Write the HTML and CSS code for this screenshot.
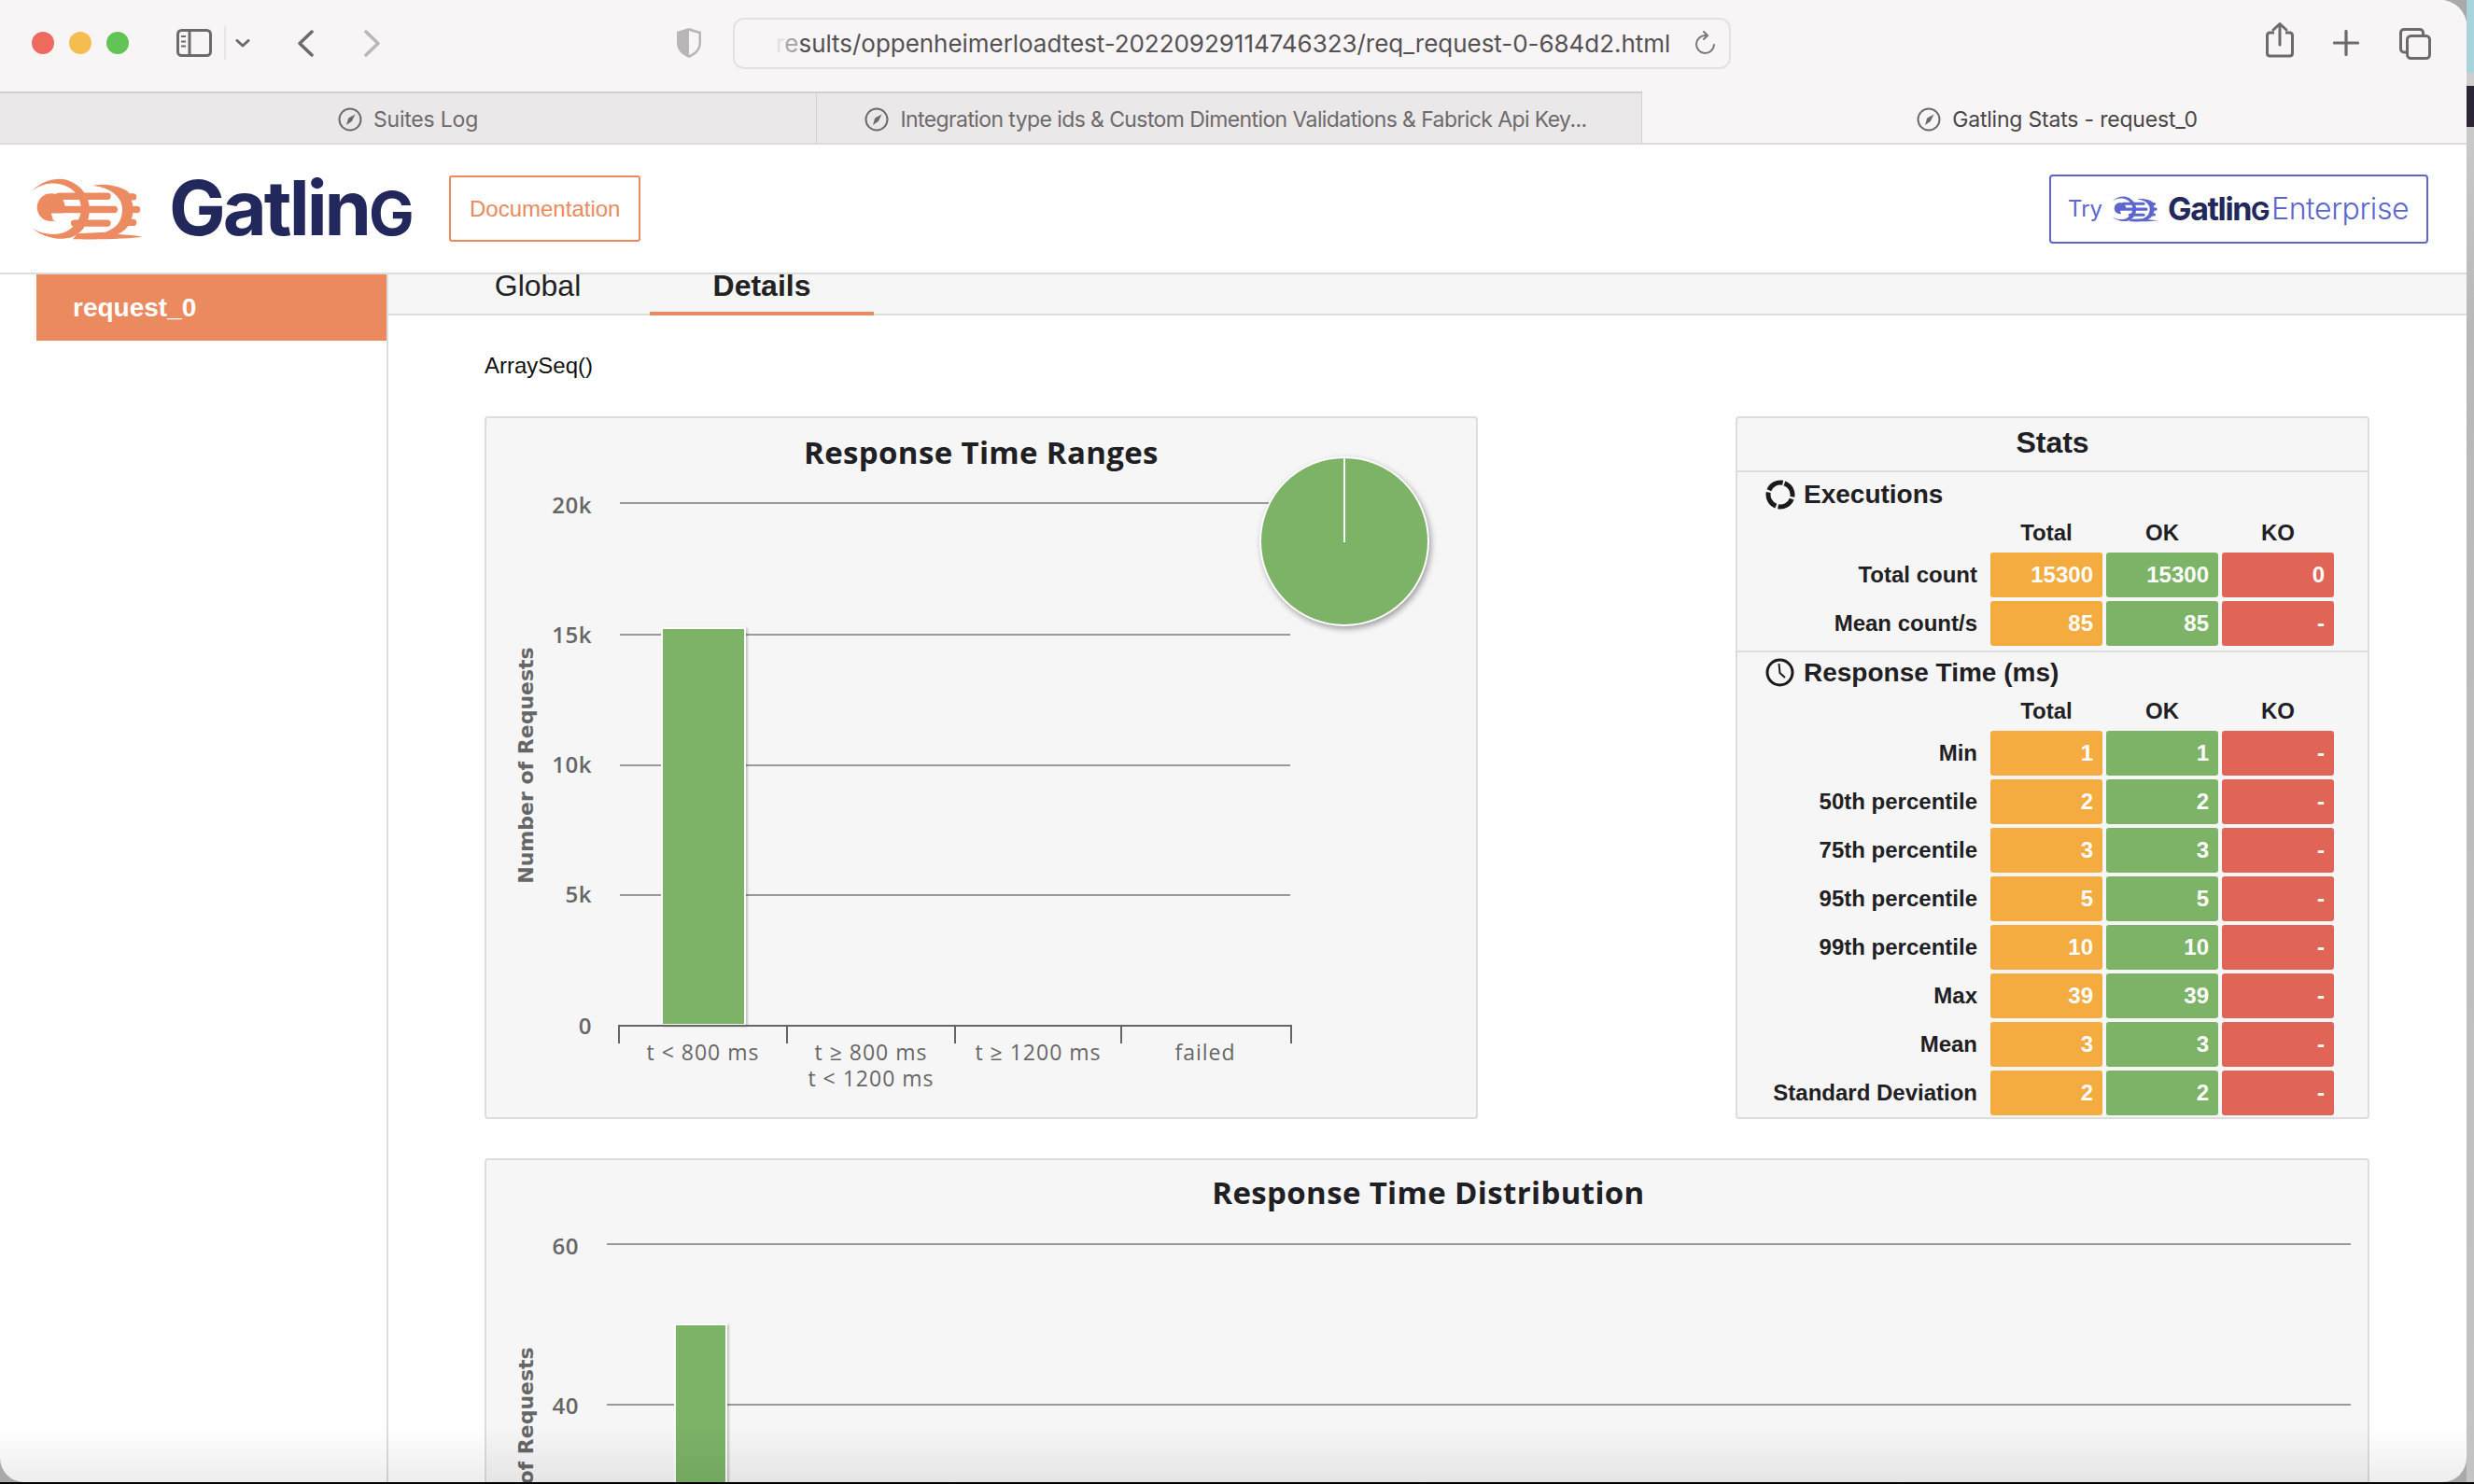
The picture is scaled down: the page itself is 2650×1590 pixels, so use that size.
FILE: index.html
```html
<!DOCTYPE html>
<html lang="en">
<head>
  <meta charset="UTF-8" />
  <title>Gatling Stats - request_0</title>
  <link rel="stylesheet" href="styles.css">
</head>
<body>

  <svg class="defs" width="0" height="0">
    <symbol id="gatling-mark" viewBox="100 90 370 205">
      <path fill="currentColor" d="M105 135C140 102 190 90 225 105C265 120 290 160 289 195C290 235 270 270 235 285C190 300 140 287 105 258C140 280 190 283 220 265C250 245 262 220 262 195C262 170 250 140 220 125C185 105 140 110 105 135Z"/>
      <path fill="currentColor" d="M300 120C350 108 410 130 418 145H430A11 11 0 0 1 430 167H424Q428 176 429 186H442A11 11 0 0 1 442 208H429Q428 218 424 228H430A11 11 0 0 1 430 250H414C404 264 392 272 380 277C410 279 440 281 462 285C400 293 300 294 235 293L250 275L340 270C385 255 395 225 395 195C395 160 360 125 300 120Z"/>
      <circle fill="currentColor" cx="165" cy="190" r="45"/>
      <g stroke="currentColor" stroke-width="22" stroke-linecap="round">
        <path d="M190 154H347"/>
        <path d="M165 197H369"/>
        <path d="M240 241H347"/>
      </g>
      <path fill="#fff" d="M165 209H214L206 232H172Z"/>
    </symbol>
    <symbol id="compass" viewBox="0 0 26 26">
      <circle cx="13" cy="13" r="11.5" fill="none" stroke="currentColor" stroke-width="2"/>
      <path fill="currentColor" d="M18.5 7.5L14.8 15L9 19L11.2 11.6Z"/>
    </symbol>
  </svg>

  <div class="screen">
    <div class="window">

      <div class="toolbar">
        <div class="lights">
          <span class="light red"></span>
          <span class="light yellow"></span>
          <span class="light green"></span>
        </div>
        <svg class="tool sidebar-icon" width="38" height="30" viewBox="0 0 38 30">
          <rect x="1.5" y="1.5" width="35" height="27" rx="4" fill="none" stroke="currentColor" stroke-width="3"/>
          <path d="M14 1.5V28.5" stroke="currentColor" stroke-width="3"/>
          <path d="M5 8H10M5 13.500H10M5 18.500H10" stroke="currentColor" stroke-width="2"/>
        </svg>
        <span class="tool-sep"></span>
        <svg class="tool chevron-icon" width="16" height="9" viewBox="0 0 16 9">
          <path d="M2 1.500L8 7L14 1.500" fill="none" stroke="currentColor" stroke-width="3" stroke-linecap="round" stroke-linejoin="round"/>
        </svg>
        <svg class="tool back-icon" width="18" height="29" viewBox="0 0 18 29">
          <path d="M16 2L3 14.500L16 27" fill="none" stroke="currentColor" stroke-width="3.500" stroke-linecap="round" stroke-linejoin="round"/>
        </svg>
        <svg class="tool forward-icon" width="18" height="29" viewBox="0 0 18 29">
          <path d="M2 2L15 14.500L2 27" fill="none" stroke="currentColor" stroke-width="3.500" stroke-linecap="round" stroke-linejoin="round"/>
        </svg>
        <svg class="tool shield-icon" width="28" height="34" viewBox="0 0 28 34">
          <path d="M14 1L27 5V17C27 25 21 30 14 33C7 30 1 25 1 17V5Z" fill="#b9b6b7"/>
          <path d="M14 4L24.500 7V17C24.500 23.500 20 27.500 14 30Z" fill="#f8f5f6"/>
        </svg>
        <div class="url-bar">
          <span class="url-text"><span class="url-fade-1">r</span><span class="url-fade-2">e</span>sults/oppenheimerloadtest-20220929114746323/req_request-0-684d2.html</span>
          <svg class="reload-icon" width="24" height="26" viewBox="0 0 24 26">
            <path d="M12 5A9.500 9.500 0 1 0 21 15" fill="none" stroke="currentColor" stroke-width="2" stroke-linecap="round"/>
            <path d="M10 1L14 5L10 9" fill="none" stroke="currentColor" stroke-width="2" stroke-linecap="round" stroke-linejoin="round"/>
          </svg>
        </div>
        <svg class="tool share-icon" width="30" height="38" viewBox="0 0 30 38">
          <path d="M9 11H4A3 3 0 0 0 1.500 14V33A3 3 0 0 0 4 36H26A3 3 0 0 0 28.500 33V14A3 3 0 0 0 26 11H21" fill="none" stroke="currentColor" stroke-width="3"/>
          <path d="M15 24V2M8 8L15 1.500L22 8" fill="none" stroke="currentColor" stroke-width="3" stroke-linecap="round" stroke-linejoin="round"/>
        </svg>
        <svg class="tool plus-icon" width="28" height="28" viewBox="0 0 28 28">
          <path d="M14 1.500V26.500M1.500 14H26.500" stroke="currentColor" stroke-width="3.200" stroke-linecap="round"/>
        </svg>
        <svg class="tool copy-icon" width="34" height="34" viewBox="0 0 34 34">
          <path d="M7 26H5A3.500 3.500 0 0 1 1.500 22.500V5A3.500 3.500 0 0 1 5 1.500H22A3.500 3.500 0 0 1 25.500 5V8" fill="none" stroke="currentColor" stroke-width="3"/>
          <rect x="8.500" y="8.500" width="24" height="24" rx="4" fill="none" stroke="currentColor" stroke-width="3"/>
        </svg>
      </div>

      <div class="tab-bar">
        <div class="browser-tab tab-first">
          <svg width="26" height="26"><use href="#compass"/></svg>
          <span>Suites Log</span>
        </div>
        <div class="browser-tab tab-second">
          <svg width="26" height="26"><use href="#compass"/></svg>
          <span>Integration type ids &amp; Custom Dimention Validations &amp; Fabrick Api Key...</span>
        </div>
        <div class="browser-tab tab-active">
          <svg width="26" height="26"><use href="#compass"/></svg>
          <span>Gatling Stats - request_0</span>
        </div>
      </div>

      <header class="site-header">
        <svg class="logo-mark" width="123" height="68"><use href="#gatling-mark"/></svg>
        <span class="brand-name">Gatlin<span class="brand-g">g</span></span>
        <a class="doc-btn">Documentation</a>
        <a class="try-btn">
          <span class="try-label">Try</span>
          <svg class="try-mark" width="51" height="29"><use href="#gatling-mark"/></svg>
          <span class="brand-name small">Gatlin<span class="brand-g">g</span></span>
          <span class="try-enterprise">Enterprise</span>
        </a>
      </header>

      <div class="page-body">
        <aside class="side-nav">
          <div class="side-item">request_0</div>
        </aside>

        <main class="content">
          <nav class="report-tabs">
            <div class="report-tab">Global</div>
            <div class="report-tab active">Details</div>
          </nav>

          <div class="report">
            <p class="array-seq">ArraySeq()</p>

            <div class="top-row">
              <section class="panel ranges-panel">
                <svg class="chart" width="1064" height="753" viewBox="519 446 1064 753">
                  <text class="chart-title" x="1051" y="497">Response Time Ranges</text>
                  <text class="axis-title" transform="translate(571 820) rotate(-90)">Number of Requests</text>

                  <line class="grid" x1="664" y1="539" x2="1382" y2="539"/>
                  <line class="grid" x1="664" y1="680" x2="1382" y2="680"/>
                  <line class="grid" x1="664" y1="820" x2="1382" y2="820"/>
                  <line class="grid" x1="664" y1="959" x2="1382" y2="959"/>

                  <text class="y-label" x="634" y="550">20k</text>
                  <text class="y-label" x="634" y="689">15k</text>
                  <text class="y-label" x="634" y="828">10k</text>
                  <text class="y-label" x="634" y="967">5k</text>
                  <text class="y-label" x="634" y="1108">0</text>

                  <rect class="bar" x="709" y="673" width="89" height="425"/>

                  <path class="axis" d="M663 1118V1099H1383V1118M843 1099V1118M1023 1099V1118M1201 1099V1118"/>
                  <text class="x-label" x="753" y="1136">t &lt; 800 ms</text>
                  <text class="x-label" x="933" y="1136">t ≥ 800 ms</text>
                  <text class="x-label" x="933" y="1164">t &lt; 1200 ms</text>
                  <text class="x-label" x="1112" y="1136">t ≥ 1200 ms</text>
                  <text class="x-label" x="1291" y="1136">failed</text>

                  <circle class="pie" cx="1440" cy="580" r="90"/>
                  <line class="pie-slice" x1="1440" y1="490" x2="1440" y2="581"/>
                </svg>
              </section>

              <section class="panel stats-panel">
                <h2 class="stats-title">Stats</h2>

                <div class="stats-section">
                  <h3 class="stats-heading">
                    <svg width="32" height="32" viewBox="0 0 32 32">
                      <circle cx="16" cy="16" r="13" fill="none" stroke="#1b1b1b" stroke-width="5" stroke-dasharray="18 2.420" transform="rotate(-70 16 16)"/>
                    </svg>
                    Executions
                  </h3>
                  <div class="stats-grid">
                    <span></span><span class="col-head">Total</span><span class="col-head">OK</span><span class="col-head">KO</span>
                    <span class="row-label">Total count</span><span class="cell total">15300</span><span class="cell ok">15300</span><span class="cell ko">0</span>
                    <span class="row-label">Mean count/s</span><span class="cell total">85</span><span class="cell ok">85</span><span class="cell ko">-</span>
                  </div>
                </div>

                <div class="stats-section">
                  <h3 class="stats-heading">
                    <svg width="32" height="32" viewBox="0 0 32 32">
                      <circle cx="15.500" cy="15.500" r="13.500" fill="none" stroke="#1b1b1b" stroke-width="3"/>
                      <path d="M14.500 6L15.500 16L21 21" fill="none" stroke="#1b1b1b" stroke-width="2"/>
                    </svg>
                    Response Time (ms)
                  </h3>
                  <div class="stats-grid">
                    <span></span><span class="col-head">Total</span><span class="col-head">OK</span><span class="col-head">KO</span>
                    <span class="row-label">Min</span><span class="cell total">1</span><span class="cell ok">1</span><span class="cell ko">-</span>
                    <span class="row-label">50th percentile</span><span class="cell total">2</span><span class="cell ok">2</span><span class="cell ko">-</span>
                    <span class="row-label">75th percentile</span><span class="cell total">3</span><span class="cell ok">3</span><span class="cell ko">-</span>
                    <span class="row-label">95th percentile</span><span class="cell total">5</span><span class="cell ok">5</span><span class="cell ko">-</span>
                    <span class="row-label">99th percentile</span><span class="cell total">10</span><span class="cell ok">10</span><span class="cell ko">-</span>
                    <span class="row-label">Max</span><span class="cell total">39</span><span class="cell ok">39</span><span class="cell ko">-</span>
                    <span class="row-label">Mean</span><span class="cell total">3</span><span class="cell ok">3</span><span class="cell ko">-</span>
                    <span class="row-label">Standard Deviation</span><span class="cell total">2</span><span class="cell ok">2</span><span class="cell ko">-</span>
                  </div>
                </div>
              </section>
            </div>

            <section class="panel distribution-panel">
              <svg class="chart" width="2019" height="480" viewBox="519 1241 2019 480">
                <text class="chart-title" x="1530" y="1290">Response Time Distribution</text>
                <text class="axis-title" transform="translate(571 1570) rotate(-90)">Number of Requests</text>

                <line class="grid" x1="650" y1="1333" x2="2518" y2="1333"/>
                <line class="grid" x1="650" y1="1505" x2="2518" y2="1505"/>
                <line class="grid" x1="650" y1="1677" x2="2518" y2="1677"/>

                <text class="y-label" x="620" y="1344">60</text>
                <text class="y-label" x="620" y="1515">40</text>

                <rect class="bar" x="723" y="1419" width="55" height="300"/>
              </svg>
            </section>
          </div>
        </main>
      </div>

      <div class="bottom-fade"></div>
    </div>

    <div class="desktop-edge">
      <span class="edge-sky"></span>
      <span class="edge-grey"></span>
      <span class="edge-photo"></span>
      <span class="edge-light"></span>
    </div>
  </div>
  <div class="dock-line"></div>

</body>
</html>
```

FILE: styles.css
```css
* {
  margin: 0;
  padding: 0;
  box-sizing: border-box;
}

html, body {
  height: 1590px;
  overflow: hidden;
}

body {
  background-color: #000;
  font-family: "Liberation Sans", Arial, sans-serif;
  color: #1f2024;
}

.defs {
  position: absolute;
}

.screen {
  display: flex;
  height: 1588px;
  background-color: #a9a9a9;
}

.dock-line {
  height: 2px;
  background-color: #000;
}

.window {
  position: relative;
  display: flex;
  flex-direction: column;
  width: 2642px;
  height: 1588px;
  background-color: #fff;
  border-radius: 0 28px 26px 26px;
  overflow: hidden;
}

.desktop-edge {
  display: flex;
  flex-direction: column;
  width: 8px;
  height: 1588px;
  box-shadow: inset 3px 0 3px rgba(0,0,0,0.25);
}

.edge-sky { height: 78px; background-color: #a8d3db; }
.edge-grey { height: 14px; background-color: #cfcdcc; }
.edge-photo { height: 44px; background-color: #2b2533; }
.edge-light { flex: 1; background: linear-gradient(#c9c9c9, #b8b8b8 15%, #c4c4c4); }

/* browser chrome */
.toolbar {
  display: flex;
  align-items: center;
  flex-shrink: 0;
  height: 98px;
  padding-bottom: 6px;
  background-color: #f8f5f6;
}

.lights {
  display: flex;
  gap: 16px;
  margin-left: 34px;
}

.light {
  width: 24px;
  height: 24px;
  border-radius: 50%;
}

.light.red { background-color: #ee6a5f; }
.light.yellow { background-color: #f5bd4f; }
.light.green { background-color: #61c454; }

.tool { flex-shrink: 0; color: #6e6a6b; }
.sidebar-icon { margin-left: 51px; }
.tool-sep { width: 2px; height: 36px; margin-left: 13px; background-color: #e8e5e6; }
.chevron-icon { margin-left: 10px; }
.back-icon { margin-left: 50px; }
.forward-icon { margin-left: 54px; color: #b9b6b7; }
.shield-icon { margin-left: 316px; }

.url-bar {
  display: flex;
  align-items: center;
  justify-content: space-between;
  width: 1069px;
  height: 55px;
  margin-left: 33px;
  padding: 0 13px 0 44px;
  border: 2px solid #e4e1e2;
  border-radius: 12px;
}

.url-text {
  font-family: Inter, "Liberation Sans", sans-serif;
  font-size: 26px;
  letter-spacing: -0.04px;
  color: #555153;
  white-space: nowrap;
}

.url-fade-1 { color: #e4e1e2; }
.url-fade-2 { color: #a9a6a7; }
.reload-icon { color: #7a7677; }

.share-icon { margin-left: 573px; margin-top: -6px; }
.plus-icon { margin-left: 42px; }
.copy-icon { margin-left: 43px; margin-top: 2px; }

.tab-bar {
  display: flex;
  flex-shrink: 0;
  height: 57px;
}

.browser-tab {
  display: flex;
  align-items: center;
  justify-content: center;
  gap: 12px;
  padding-top: 2px;
  font-family: Inter, "Liberation Sans", sans-serif;
  font-size: 23px;
  letter-spacing: -0.2px;
  color: #6e6a6b;
  background-color: #ebe8e9;
  border-top: 2px solid #d3d0d1;
  border-bottom: 2px solid #dedcdc;
}

.tab-first { width: 875px; border-right: 1px solid #d3d0d1; }
.tab-second { width: 884px; padding-right: 7px; border-right: 1px solid #d3d0d1; letter-spacing: -0.6px; }

.tab-active {
  flex: 1;
  padding-left: 6px;
  background-color: #f8f5f6;
  border-top-color: #f8f5f6;
  color: #4a4647;
}

.tab-active svg { color: #6e6a6b; }

/* gatling header */
.site-header {
  display: flex;
  align-items: center;
  flex-shrink: 0;
  height: 139px;
  padding-left: 33px;
  background-color: #fff;
  border-bottom: 2px solid #ddd;
}

.logo-mark { color: #ec8b61; margin-top: -2px; }

.brand-name {
  width: 258px;
  margin-left: 25px;
  font-family: Inter, "Liberation Sans", sans-serif;
  font-size: 81px;
  font-weight: 700;
  letter-spacing: -3px;
  line-height: 1;
  color: #22275c;
  white-space: nowrap;
}

.brand-g {
  font-size: 0.8em;
  text-transform: uppercase;
}

.doc-btn {
  margin-left: 42px;
  padding: 20px;
  font-size: 24px;
  line-height: 27px;
  color: #ea8a5e;
  border: 2px solid #ea8a5e;
  border-radius: 3px;
}

.try-btn {
  display: flex;
  align-items: center;
  width: 406px;
  height: 74px;
  margin-left: auto;
  margin-right: 41px;
  padding-left: 18px;
  border: 2px solid #5c66cc;
  border-radius: 4px;
  color: #5c66cc;
  font-family: Inter, "Liberation Sans", sans-serif;
}

.try-label { font-size: 24px; }
.try-mark { margin-left: 10px; color: #5c66cc; }

.brand-name.small {
  width: 110px;
  margin-left: 9px;
  font-size: 34px;
  letter-spacing: -1.4px;
}

.try-enterprise {
  margin-left: 1px;
  font-size: 32px;
  font-weight: 300;
  letter-spacing: -0.4px;
}

/* report */
.page-body {
  display: flex;
  flex: 1;
  min-height: 0;
}

.side-nav {
  flex-shrink: 0;
  width: 416px;
  padding-left: 39px;
  border-right: 2px solid #ddd;
}

.side-item {
  height: 71px;
  padding: 20px 0 0 39px;
  font-size: 28px;
  font-weight: 700;
  color: #fff;
  background-color: #eb8a5f;
}

.content {
  flex: 1;
  min-width: 0;
}

.report-tabs {
  display: flex;
  height: 44px;
  padding-left: 40px;
  background-color: #f6f6f6;
  border-bottom: 2px solid #ddd;
}

.report-tab {
  width: 240px;
  height: 44px;
  font-size: 32px;
  line-height: 24px;
  text-align: center;
  overflow: hidden;
  color: #222;
}

.report-tab.active {
  font-weight: 700;
  border-bottom: 4px solid #eb8a5f;
}

.report {
  padding: 0 104px 0 103px;
}

.array-seq {
  height: 108px;
  padding-top: 40px;
  font-size: 24px;
  line-height: 28px;
  color: #111;
}

.top-row {
  display: flex;
  justify-content: space-between;
}

.panel {
  background-color: #f6f6f6;
  box-shadow: inset 0 0 0 2px #ddd;
  border-radius: 4px;
}

.ranges-panel {
  width: 1064px;
  height: 753px;
}

.chart {
  display: block;
}

.chart-title {
  font-family: "Open Sans", sans-serif;
  font-size: 33px;
  font-weight: 700;
  letter-spacing: 0.35px;
  text-anchor: middle;
  fill: #1f2024;
}

.axis-title {
  font-family: "DejaVu Sans", sans-serif;
  font-size: 22px;
  font-weight: 700;
  text-anchor: middle;
  fill: #666;
}

.y-label {
  font-family: "Open Sans", sans-serif;
  font-size: 24px;
  font-weight: 600;
  letter-spacing: 0.5px;
  text-anchor: end;
  fill: #666;
}

.x-label {
  font-family: "Open Sans", sans-serif;
  font-size: 23px;
  letter-spacing: 1px;
  text-anchor: middle;
  fill: #666;
}

.grid {
  stroke: #999;
  stroke-width: 2;
}

.axis {
  fill: none;
  stroke: #666;
  stroke-width: 2;
}

.bar {
  fill: #7cb367;
  stroke: #fff;
  stroke-width: 2;
  filter: drop-shadow(2px 1px 1px rgba(0,0,0,0.2));
}

.pie {
  fill: #7cb367;
  stroke: #fff;
  stroke-width: 2;
  filter: drop-shadow(2px 3px 3px rgba(0,0,0,0.35));
}

.pie-slice {
  stroke: #fff;
  stroke-width: 2;
}

.stats-panel {
  width: 679px;
  height: 753px;
}

.stats-title {
  height: 60px;
  font-size: 32px;
  line-height: 56px;
  text-align: center;
  border-bottom: 2px solid #ddd;
  margin: 0 2px;
}

.stats-section {
  height: 191px;
  margin: 0 2px;
  padding-top: 2px;
}

.stats-section + .stats-section {
  height: auto;
  padding-top: 0;
  border-top: 2px solid #ddd;
}

.stats-heading {
  display: flex;
  align-items: center;
  gap: 9px;
  height: 44px;
  padding-left: 30px;
  font-size: 28px;
  font-weight: 700;
}

.stats-grid {
  display: grid;
  grid-template-columns: 1fr 120px 120px 120px;
  grid-template-rows: 36px;
  grid-auto-rows: 48px;
  column-gap: 4px;
  row-gap: 4px;
  padding-right: 36px;
  font-size: 24px;
  font-weight: 700;
}

.col-head {
  line-height: 38px;
  text-align: center;
}

.row-label {
  padding-right: 10px;
  line-height: 47px;
  text-align: right;
  white-space: nowrap;
}

.cell {
  padding-right: 10px;
  line-height: 47px;
  text-align: right;
  color: #fff;
  border-radius: 3px;
}

.cell.total { background-color: #f4ab3f; }
.cell.ok { background-color: #7cb367; }
.cell.ko { background-color: #e16557; }

.distribution-panel {
  margin-top: 42px;
  width: 2019px;
  height: 480px;
}

.bottom-fade {
  position: absolute;
  left: 0;
  right: 0;
  bottom: 0;
  height: 60px;
  background: linear-gradient(rgba(0,0,0,0), rgba(0,0,0,0.07));
  pointer-events: none;
}
```
